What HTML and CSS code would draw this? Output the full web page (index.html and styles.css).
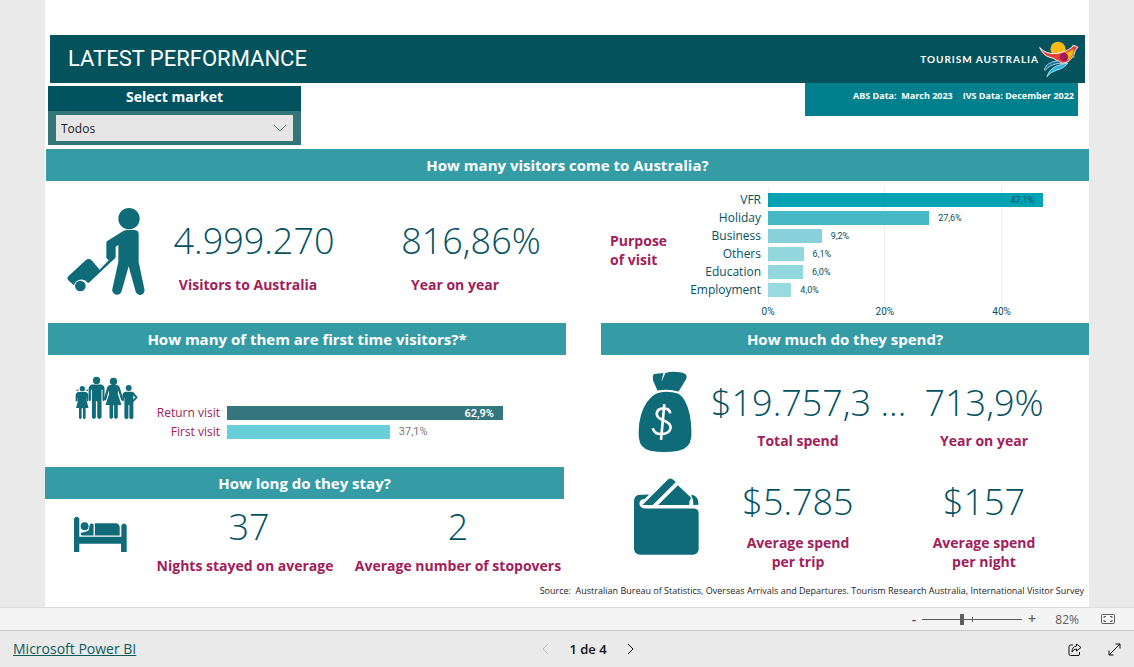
FILE: index.html
```html
<!DOCTYPE html>
<html lang="en">
<head>
<meta charset="utf-8">
<title>Latest Performance</title>
<link rel="stylesheet" href="styles.css">
</head>
<body>
<main class="stage">
  <div class="report">
    <header class="header">
      <h1 class="title">LATEST PERFORMANCE</h1>
      <div class="brand">
        <span>TOURISM AUSTRALIA</span>
        <svg class="brand-logo" viewBox="745 46 120 116" aria-hidden="true">
          <circle cx="802" cy="74" r="23" fill="#fdb913"/>
          <path d="M746 69 Q765 91 798 87 Q825 84 845 68 L848 62 L863 68 L855 77 Q850 100 832 112 Q815 122 802 112 Q790 100 775 98 Q757 93 746 69Z" fill="#e8412f" stroke="#fff" stroke-width="3"/>
          <path d="M818 87 Q835 83 848 75 Q850 95 832 107Z" fill="#fdb913"/>
          <circle cx="820" cy="98" r="13" fill="#a3195b"/>
          <path d="M850 83 L853 101 L846 97Z" fill="#8cc63f"/>
          <path d="M760 137 Q766 113 803 109 L813 116 Q775 120 763 139Z" fill="#1478a8" stroke="#fff" stroke-width="2"/>
          <path d="M768 158 Q776 128 814 120 L832 116 Q822 132 798 138 Q779 144 768 158Z" fill="#27b5e8" stroke="#fff" stroke-width="2"/>
        </svg>
      </div>
    </header>

    <div class="subheader">
      <div class="filter">
        <label class="filter-title" for="market">Select market</label>
        <div class="filter-body">
          <select id="market" class="filter-select"><option>Todos</option></select>
          <svg class="filter-arrow" viewBox="0 0 14 8" aria-hidden="true"><path d="M1 1l6 6 6-6"/></svg>
        </div>
      </div>
      <p class="dates"><span>ABS Data:&nbsp; March 2023</span><span>IVS Data: December 2022</span></p>
    </div>

    <h2 class="band band-full">How many visitors come to Australia?</h2>
    <section class="visitors">
      <svg class="icon icon-traveller" viewBox="35 50 234 264" aria-hidden="true">
        <circle cx="221" cy="85" r="32"/>
        <path d="M153 157Q153 153 157 151L200 124Q207 119 216 119H238Q250 120 250 132V215L267 296A13 13 0 0 1 241 304L220 228L199 302A14 14 0 0 1 171 296L189 215V164L181 169V200Q178 208 171 211L100 278L93 275L131 240L160 210L153 203Z"/>
        <path d="M39 258L91 210Q99 203 108 209L131 235L132 242L96 276A23 23 0 0 0 56 285L38 269Q34 263 39 258Z"/>
        <circle cx="75" cy="287" r="16"/>
      </svg>
      <div class="kpi kpi-visitors"><p class="value">4.999.270</p><p class="label">Visitors to Australia</p></div>
      <div class="kpi kpi-growth"><p class="value">816,86%</p><p class="label">Year on year</p></div>
      <h3 class="purpose">Purpose<br>of visit</h3>
      <div class="chart">
        <ul class="chart-names">
          <li>VFR</li><li>Holiday</li><li>Business</li><li>Others</li><li>Education</li><li>Employment</li>
        </ul>
        <div class="plot">
          <div class="plot-row"><div class="bar bar-vfr" style="width:94.2%"><span>47,1%</span></div></div>
          <div class="plot-row"><div class="bar bar-holiday" style="width:55.2%"></div><span>27,6%</span></div>
          <div class="plot-row"><div class="bar bar-business" style="width:18.4%"></div><span>9,2%</span></div>
          <div class="plot-row"><div class="bar bar-others" style="width:12.2%"></div><span>6,1%</span></div>
          <div class="plot-row"><div class="bar bar-others" style="width:12%"></div><span>6,0%</span></div>
          <div class="plot-row"><div class="bar bar-employment" style="width:8%"></div><span>4,0%</span></div>
        </div>
        <div class="axis"><span>0%</span><span>20%</span><span>40%</span></div>
      </div>
    </section>

    <div class="columns">
      <div class="column-left">
        <h2 class="band band-first">How many of them are first time visitors?*</h2>
        <section class="first-time">
          <svg class="icon icon-family" viewBox="103 48 190 132" aria-hidden="true">
            <circle cx="125" cy="86" r="8"/><path d="M108 88l8 2-8 4zM142 88l-8 2 8 4zM114 96H136Q143 98 143 106V124H139V108L138 122L144 144H135V174Q131 180 127 174V145H123V174Q119 180 115 174V144H106L112 122L111 108V124H105V106Q106 97 114 96Z"/>
            <circle cx="168" cy="61" r="11"/><path d="M154 73H182Q192 75 192 86V120Q189 127 186 120V89H183V173Q177 181 170 173V124H166V173Q160 181 154 173V89H151V120Q147 127 144 120V86Q145 75 154 73Z"/>
            <circle cx="219" cy="64" r="11"/><path d="M208 75H230Q237 76 239 85L248 117Q247 125 242 119L233 91L232 101L243 135H232V173Q226 181 221 173V136H218V173Q212 181 207 173V135H195L206 101L205 91L197 119Q192 125 190 117L199 85Q201 76 208 75Z"/>
            <circle cx="265" cy="84" r="9"/><path d="M254 95H276Q281 96 283 101L291 110Q292 113 289 116L279 126V174Q273 181 267 174V135H264V174Q258 181 252 174V110L250 124H246V104Q248 96 254 95ZM279 106V119L285 112Z" fill-rule="evenodd"/>
          </svg>
          <div class="visits">
            <span class="visit-name">Return visit</span>
            <div class="visit-row"><div class="bar bar-return" style="width:100%"><span>62,9%</span></div></div>
            <span class="visit-name">First visit</span>
            <div class="visit-row"><div class="bar bar-new" style="width:59%"></div><span>37,1%</span></div>
          </div>
        </section>
        <h2 class="band band-stay">How long do they stay?</h2>
        <section class="stay">
          <svg class="icon icon-bed" viewBox="102 48 160 110" aria-hidden="true">
            <path d="M102 55Q110 44 118 55V110H245V76Q252 64 261 76V156H244V131H118V156H102Z"/>
            <circle cx="134" cy="78" r="12"/>
            <path d="M123 98Q135 97 146 91L150 73Q153 68 161 71V106H126Q120 104 123 98ZM165 69H229Q240 71 240 82V106H165Z"/>
          </svg>
          <div class="kpi kpi-nights"><p class="value">37</p><p class="label">Nights stayed on average</p></div>
          <div class="kpi"><p class="value">2</p><p class="label">Average number of stopovers</p></div>
        </section>
      </div>

      <div class="column-right">
        <h2 class="band">How much do they spend?</h2>
        <section class="spend">
          <svg class="icon icon-bag" viewBox="52 30 162 248" aria-hidden="true">
            <path d="M96 47Q96 38 106 38L128 36L122 63L134 36Q153 29 178 34Q194 36 198 44Q200 52 193 61L174 92Q144 83 110 89L97 59Z"/>
            <path d="M105 99Q137 87 174 99Q197 113 208 162Q215 200 212 232Q208 265 174 271Q130 279 88 271Q57 264 54 232Q51 194 61 161Q75 117 105 99Z"/>
            <path class="icon-line" d="M149 158Q147 143 129 143Q110 143 108 158Q107 171 129 180Q151 188 150 202Q147 220 122 221Q100 220 96 203M131 130L121 238"/>
          </svg>
          <div class="kpi kpi-total"><p class="value">$19.757,3 ...</p><p class="label">Total spend</p></div>
          <div class="kpi"><p class="value">713,9%</p><p class="label">Year on year</p></div>
        </section>
        <section class="spend spend-average">
          <svg class="icon icon-wallet" viewBox="43 353 194 230" aria-hidden="true">
            <path d="M43 420Q44 403 63 403L88 402L76 415Q59 416 59 430Q60 443 76 444H222Q236 445 236 458V565Q235 581 219 582H60Q44 580 43 565Z"/>
            <path d="M68 434L145 357Q151 352 158 357L168 365L99 434ZM115 434L174 375L213 411Q213 417 209 421L208 434ZM213 404Q236 404 236 433L220 434Q220 422 218 416Z"/>
          </svg>
          <div class="kpi"><p class="value">$5.785</p><p class="label">Average spend<br>per trip</p></div>
          <div class="kpi"><p class="value">$157</p><p class="label">Average spend<br>per night</p></div>
        </section>
      </div>
    </div>
    <p class="source">Source:&nbsp; Australian Bureau of Statistics, Overseas Arrivals and Departures. Tourism Research Australia, International Visitor Survey</p>
  </div>
</main>

<div class="zoombar">
  <button class="zoom-step" type="button" aria-label="Zoom out">-</button>
  <input class="zoom-range" type="range" min="10" max="200" value="86" aria-label="Zoom">
  <button class="zoom-step" type="button" aria-label="Zoom in">+</button>
  <span class="zoom-value">82%</span>
  <button class="icon-button" type="button" aria-label="Fit to page">
    <svg width="14" height="10" viewBox="0 0 14 10" aria-hidden="true"><rect x=".5" y=".5" width="13" height="9" rx="1"/><path d="M3 4V2.500H5M9 2.500H11V4M11 6V7.500H9M5 7.500H3V6"/></svg>
  </button>
</div>

<footer class="footer">
  <a class="footer-link" href="#">Microsoft Power BI</a>
  <nav class="pager" aria-label="Pages">
    <button class="icon-button" type="button" aria-label="Previous page" disabled><svg width="7" height="12" viewBox="0 0 7 12" aria-hidden="true"><path d="M6 1L1 6l5 5"/></svg></button>
    <span>1 de 4</span>
    <button class="icon-button" type="button" aria-label="Next page"><svg width="7" height="12" viewBox="0 0 7 12" aria-hidden="true"><path d="M1 1l5 5-5 5"/></svg></button>
  </nav>
  <div class="footer-actions">
    <button class="icon-button" type="button" aria-label="Share"><svg width="14" height="13" viewBox="0 0 14 13" aria-hidden="true"><path d="M5 2H2.500Q1 2 1 3.500V11Q1 12.500 2.500 12.500H10Q11.500 12.500 11.500 11V9M8.500 1L13 4.500L8.500 8V6Q5.500 6 4 9Q4 3.500 8.500 3Z"/></svg></button>
    <button class="icon-button" type="button" aria-label="Full screen"><svg width="13" height="13" viewBox="0 0 13 13" aria-hidden="true"><path d="M1 12L12 1M7.500 1H12V5.500M1 7.500V12H5.500"/></svg></button>
  </div>
</footer>
</body>
</html>
```
FILE: styles.css
```css
* { box-sizing: border-box; }

body {
  margin: 0;
  min-height: 100vh;
  display: flex;
  flex-direction: column;
  background: #eaeaea;
  color: #04525f;
  font-family: "Open Sans", "Noto Sans", sans-serif;
  font-size: 12px;
}

h1, h2, h3, p, ul { margin: 0; padding: 0; }
ul { list-style: none; }
button { padding: 0; border: 0; background: none; font: inherit; color: inherit; }
svg { display: block; flex: none; }

.stage { flex: 1; display: flex; flex-direction: column; padding: 0 45px; }
.report { flex: 1; padding-top: 35px; background: #fff; }

.header {
  display: flex;
  align-items: center;
  justify-content: space-between;
  height: 48px;
  margin: 0 4px 0 5px;
  padding: 0 6px 0 18px;
  background: #04525c;
  color: #fff;
}
.title { font: 400 22px/48px Roboto, sans-serif; }
.brand { display: flex; align-items: center; font: 700 10px/16px Lato, sans-serif; letter-spacing: 1px; }
.brand-logo { width: 40px; height: 38px; }

.subheader { display: flex; justify-content: space-between; align-items: flex-start; padding: 0 11px 4px 3px; }
.filter { width: 253px; margin-top: 3px; background: #34757a; }
.filter-title {
  display: block;
  height: 25px;
  background: #00525e;
  color: #fff;
  font-size: 14px;
  font-weight: 700;
  line-height: 22px;
  text-align: center;
}
.filter-body { position: relative; padding: 4px 8px; }
.filter-select {
  display: block;
  width: 100%;
  height: 26px;
  padding: 0 5px;
  border: 0;
  border-radius: 0;
  appearance: none;
  background: #e6e6e6;
  color: #212121;
  font: 12px "Open Sans", sans-serif;
}
.filter-arrow { position: absolute; right: 14px; top: 13px; width: 14px; height: 8px; fill: none; stroke: #5f7f86; pointer-events: none; }
.dates {
  display: flex;
  justify-content: flex-end;
  gap: 10px;
  width: 273px;
  height: 33px;
  padding: 4px 4px 0;
  background: #00808c;
  color: #fff;
  font-size: 9px;
  font-weight: 700;
  line-height: 18px;
  white-space: nowrap;
}

.band { height: 32px; background: #359ca6; color: #fff; font-size: 15px; font-weight: 700; line-height: 32px; text-align: center; }
.band-full { margin-left: 1px; }
.band-first { margin-left: 3px; }
.band-stay { margin-right: 2px; }

.icon { fill: #0f6b78; }
.icon-line { fill: none; stroke: #fff; stroke-width: 8; }

.kpi { text-align: center; white-space: nowrap; }
.value { font-size: 36px; font-weight: 300; line-height: 40px; }
.label { color: #a12059; font-size: 14px; font-weight: 700; line-height: 19px; }

.visitors { display: grid; grid-template-columns: 99fr 218fr 247fr 80fr 399fr; height: 142px; margin-left: 1px; }
.icon-traveller { width: 78px; height: 88px; margin-top: 26px; justify-self: end; }
.visitors .kpi { padding-top: 40px; }
.visitors .label { margin-top: 14px; }
.kpi-visitors .label { padding-right: 12px; }
.kpi-growth { padding-right: 31px; }
.kpi-growth .label { padding-right: 32px; }
.purpose { padding-top: 50px; color: #a12059; font-size: 14px; font-weight: 700; line-height: 19px; }

.chart { display: grid; grid-template-columns: 71px 1fr; column-gap: 7px; align-content: start; padding: 6px 29px 0 0; }
.chart-names { padding-top: 4px; text-align: right; line-height: 18px; }
.plot {
  height: 117px;
  padding-top: 4px;
  background:
    linear-gradient(#eee, #eee) 0 0 / 1px 100% no-repeat,
    linear-gradient(#eee, #eee) 40% 0 / 1px 100% no-repeat,
    linear-gradient(#eee, #eee) 80% 0 / 1px 100% no-repeat;
}
.plot-row { display: flex; align-items: center; gap: 9px; height: 18px; font: 9px Roboto, sans-serif; }
.bar { height: 14px; line-height: 15px; text-align: right; }
.bar-vfr { padding-right: 9px; background: #00a2b3; }
.bar-holiday { background: #48b8c6; }
.bar-business { background: #88d1da; }
.bar-others { background: #92d7de; }
.bar-employment { background: #98dae0; }
.axis {
  grid-column: 2;
  display: grid;
  grid-template-columns: repeat(3, 1fr);
  width: 120%;
  margin-left: -20%;
  font: 10px/16px Roboto, sans-serif;
  text-align: center;
}

.columns { display: grid; grid-template-columns: 521fr 488fr; column-gap: 35px; }
.first-time { display: flex; gap: 15px; height: 112px; padding: 21px 63px 0 30px; }
.icon-family { width: 63px; height: 44px; }
.visits { flex: 1; display: grid; grid-template-columns: 67px 1fr; column-gap: 7px; align-content: start; padding-top: 27px; white-space: nowrap; }
.visit-name { color: #a12059; text-align: right; line-height: 19px; }
.visit-row { display: flex; align-items: center; gap: 9px; height: 19px; color: #777; font: 11px Roboto, sans-serif; }
.bar-return { padding-right: 9px; background: #34757e; color: #fff; font-weight: 600; }
.bar-new { background: #67cfd9; }

.stay { display: grid; grid-template-columns: 95fr 210fr 216fr; padding-top: 8px; }
.icon-bed { width: 53px; height: 37px; margin: 9px 0 0 29px; }
.stay .label { margin-top: 9px; }
.kpi-nights .value { padding-left: 8px; }

.spend { display: grid; grid-template-columns: 100fr 194fr 178fr; height: 112px; padding: 28px 16px 0 0; }
.spend .label { margin-top: 8px; }
.kpi-total { min-width: 0; }
.kpi-total .value { padding-left: 10px; }
.icon-bag { width: 54px; height: 82px; margin: -12px 0 0 37px; }
.icon-wallet { width: 65px; height: 77px; margin: -4px 0 0 33px; }
.spend-average { padding-top: 15px; }
.spend-average .label { margin-top: 11px; }

.source { padding: 3px 5px 6px; color: #252423; font-size: 9px; line-height: 18px; text-align: right; white-space: nowrap; }

.zoombar {
  display: flex;
  align-items: center;
  justify-content: flex-end;
  height: 24px;
  padding-right: 19px;
  border-top: 1px solid #dcdcdc;
  border-bottom: 1px solid #c8c8c8;
  background: #f4f4f4;
  color: #605e5c;
}
.zoom-step { width: 12px; font-size: 14px; font-weight: 600; line-height: 20px; }
.zoom-range { width: 100px; height: 12px; margin: 0 4px 0 2px; appearance: none; background: linear-gradient(#605e5c, #605e5c) 0 6px / 100% 1px no-repeat, linear-gradient(#605e5c, #605e5c) 50px 4px / 1px 5px no-repeat; }
.zoom-range::-webkit-slider-thumb { appearance: none; width: 4px; height: 11px; background: #605e5c; }
.zoom-value { width: 41px; text-align: right; margin-right: 22px; }
.icon-button svg { fill: none; stroke: currentColor; }

.footer { display: grid; grid-template-columns: 1fr auto 1fr; align-items: center; height: 36px; padding: 0 13px; color: #111; }
.footer-link { color: #0b5c5e; font-size: 14px; line-height: 18px; text-decoration: underline; }
.pager { display: flex; align-items: center; gap: 20px; margin-left: 42px; font-size: 13px; font-weight: 600; }
.pager .icon-button:disabled { color: #bbb; }
.footer-actions { display: flex; justify-content: flex-end; align-items: center; gap: 26px; }
```
